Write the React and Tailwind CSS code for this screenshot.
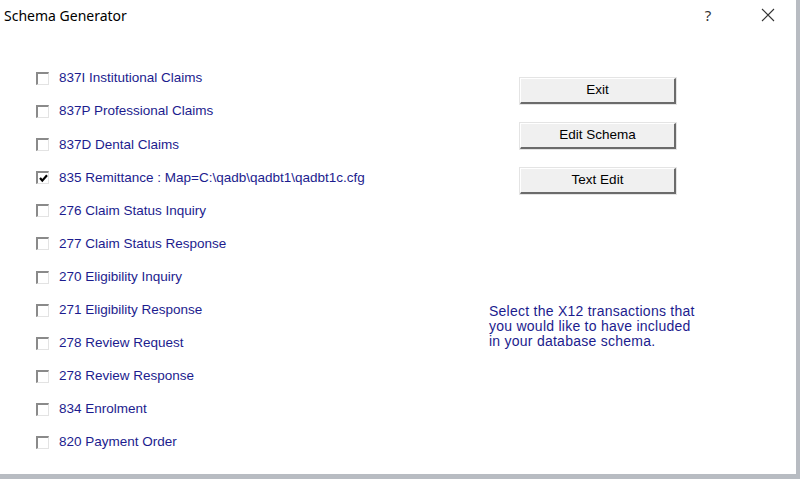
import { useState } from "react"

const TRANSACTIONS = [
  { id: "837i", label: "837I Institutional Claims" },
  { id: "837p", label: "837P Professional Claims" },
  { id: "837d", label: "837D Dental Claims" },
  { id: "835", label: "835 Remittance : Map=C:\\qadb\\qadbt1\\qadbt1c.cfg", checked: true },
  { id: "276", label: "276 Claim Status Inquiry" },
  { id: "277", label: "277 Claim Status Response" },
  { id: "270", label: "270 Eligibility Inquiry" },
  { id: "271", label: "271 Eligibility Response" },
  { id: "278q", label: "278 Review Request" },
  { id: "278r", label: "278 Review Response" },
  { id: "834", label: "834 Enrolment" },
  { id: "820", label: "820 Payment Order" },
]

function Checkbox({ checked, onChange }) {
  return (
    <button
      onClick={onChange}
      className="flex h-[13px] w-[13px] shrink-0 items-center justify-center border-t-2 border-l-2 border-b border-r border-t-[#8a8a8a] border-l-[#8a8a8a] border-b-[#e3e3e3] border-r-[#e3e3e3] bg-white"
    >
      {checked && (
        <svg width="9" height="9" viewBox="0 0 9 9">
          <path d="M1 4 L3.3 6.6 L8 1.2" fill="none" stroke="#000" strokeWidth="2.2" />
        </svg>
      )}
    </button>
  )
}

function WinButton({ children }) {
  return (
    <button className="h-[26px] w-[156px] border-t border-l border-b-2 border-r-2 border-t-white border-l-white border-b-[#6b6b6b] border-r-[#6b6b6b] bg-[#f0f0f0] text-[13.5px] text-black shadow-[0_0_0_1px_#e4e4e4]">
      {children}
    </button>
  )
}

export default function App() {
  const [checks, setChecks] = useState(
    Object.fromEntries(TRANSACTIONS.map((t) => [t.id, !!t.checked]))
  )

  const toggle = (id) => setChecks((prev) => ({ ...prev, [id]: !prev[id] }))

  return (
    <div
      className="flex h-[479px] w-[800px] flex-col overflow-hidden bg-[#b8bcc2]"
      style={{ fontFamily: '"Liberation Sans", Arial, sans-serif' }}
    >
      <div className="mr-[4px] mb-[5px] flex flex-1 flex-col bg-white">
        {/* Title bar */}
        <div className="flex h-[30px] items-center justify-between pl-[4px]">
          <span className="text-[14px] text-black" style={{ fontFamily: '"Noto Sans", "Open Sans", sans-serif' }}>
            Schema Generator
          </span>
          <div className="flex items-center pr-[19px]">
            <span className="w-[46px] text-center text-[15px] text-[#333]" style={{ fontFamily: '"Noto Sans", sans-serif' }}>?</span>
            <span className="flex w-[46px] justify-end pr-[2px]">
              <svg width="14" height="14" viewBox="0 0 14 14">
                <path d="M1 1 L13 13 M13 1 L1 13" stroke="#333" strokeWidth="1.1" />
              </svg>
            </span>
          </div>
        </div>

        {/* Body */}
        <div className="flex flex-1">
          <div className="flex w-[480px] flex-col gap-[20.1px] pt-[42px] pl-[36px]">
            {TRANSACTIONS.map((t) => (
              <label key={t.id} className="flex h-[13px] cursor-default items-center gap-[10px]">
                <Checkbox checked={checks[t.id]} onChange={() => toggle(t.id)} />
                <span className="text-[13.5px] text-[#1c1c8e]">{t.label}</span>
              </label>
            ))}
          </div>

          <div className="flex flex-col pl-[40px]">
            <div className="flex flex-col gap-[19px] pt-[48px]">
              <WinButton>Exit</WinButton>
              <WinButton>Edit Schema</WinButton>
              <WinButton>Text Edit</WinButton>
            </div>
            <p className="mt-[110px] -ml-[31px] w-[260px] text-[14px] leading-[15px] tracking-[0.25px] text-[#1c1c8e]">
              Select the X12 transactions that
              <br />
              you would like to have included
              <br />
              in your database schema.
            </p>
          </div>
        </div>
      </div>
    </div>
  )
}
